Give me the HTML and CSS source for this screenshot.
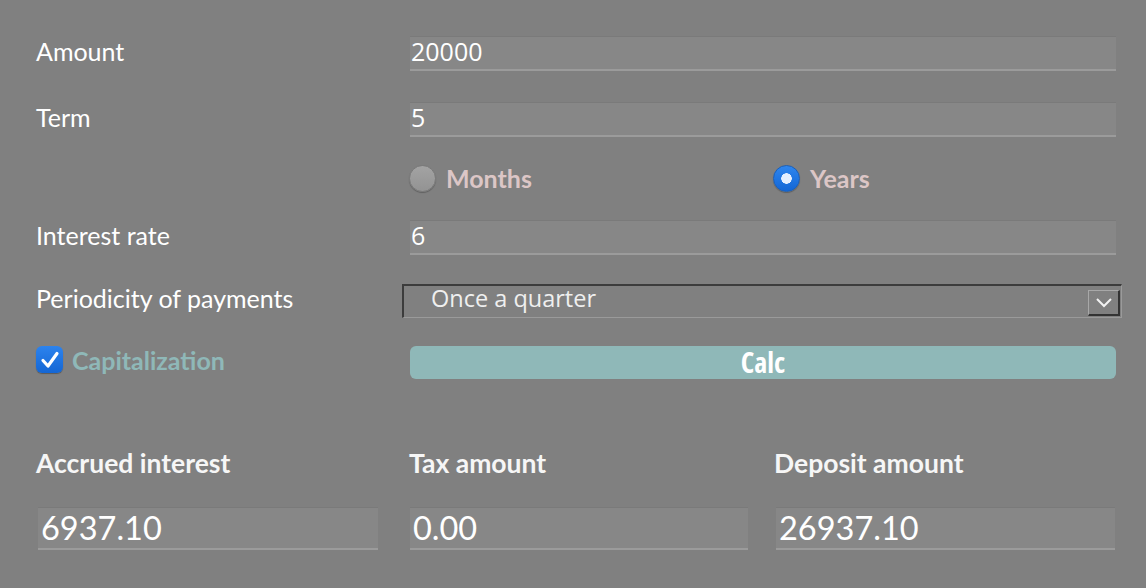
FILE: index.html
```html
<!DOCTYPE html>
<html lang="en">
<head>
<meta charset="utf-8">
<title>Deposit calculator</title>
<link rel="stylesheet" href="styles.css">
</head>
<body>
<main class="calc">
  <div class="row row-amount">
    <label class="label" for="amount">Amount</label>
    <input class="field" id="amount" type="text" value="20000">
  </div>
  <div class="row row-term">
    <label class="label" for="term">Term</label>
    <input class="field" id="term" type="text" value="5">
  </div>
  <div class="row row-radio">
    <span></span>
    <div class="radios">
      <label class="radio radio-months"><input type="radio" name="unit"><span>Months</span></label>
      <label class="radio"><input type="radio" name="unit" checked><span>Years</span></label>
    </div>
  </div>
  <div class="row row-rate">
    <label class="label" for="rate">Interest rate</label>
    <input class="field" id="rate" type="text" value="6">
  </div>
  <div class="row row-period">
    <label class="label" for="period">Periodicity of payments</label>
    <div class="select" id="period">
      <span class="select-text">Once a quarter</span>
      <span class="select-btn"><svg width="18" height="12" viewBox="0 0 18 12"><path d="M2 2 L9 9 L16 2" fill="none" stroke="#f2f2f2" stroke-width="2"/></svg></span>
    </div>
  </div>
  <div class="row row-cap">
    <label class="check"><span class="check-box"><svg width="20" height="18" viewBox="0 0 20 18"><path d="M3 9.5 L8 15 L17 2.5" fill="none" stroke="#fff" stroke-width="3.2" stroke-linecap="round" stroke-linejoin="round"/></svg></span><span class="check-text">Capitalization</span></label>
    <button class="btn" type="button">Calc</button>
  </div>

  <section class="results">
    <div class="result">
      <h3 class="result-title">Accrued interest</h3>
      <div class="result-value">6937.10</div>
    </div>
    <div class="result r2">
      <h3 class="result-title">Tax amount</h3>
      <div class="result-value">0.00</div>
    </div>
    <div class="result r3">
      <h3 class="result-title">Deposit amount</h3>
      <div class="result-value">26937.10</div>
    </div>
  </section>
</main>
</body>
</html>
```

FILE: styles.css
```css
html, body {
  margin: 0;
  padding: 0;
  background: #808080;
}
body {
  font-family: "Lato", "Noto Sans", sans-serif;
  color: #ffffff;
  width: 1146px;
  height: 588px;
  overflow: hidden;
}
.calc {
  padding: 36px 30px 0 36px;
}
.row {
  display: grid;
  grid-template-columns: 374px 1fr;
  align-items: center;
}
.label {
  font-size: 25px;
  color: #fff;
  padding-bottom: 5px;
}
.field {
  box-sizing: border-box;
  height: 35px;
  width: 100%;
  margin: 0;
  padding: 0 1px 4px;
  border: 0;
  border-top: 1px solid #7a7a7a;
  border-bottom: 2px solid #9b9b9b;
  background: #878787;
  color: #fff;
  font-family: "Open Sans", "Lato", sans-serif;
  font-size: 25px;
  outline: none;
}
.row-term { margin-top: 31px; }
.row-radio { margin-top: 26px; height: 28px; }
.row-rate { margin-top: 29px; }
.row-period { margin-top: 28px; }
.row-cap { margin-top: 28px; align-items: start; }

.radios {
  display: flex;
  align-items: center;
  margin-left: -1px;
}
.radio {
  display: flex;
  align-items: center;
  gap: 10px;
  font-weight: 700;
  font-size: 25px;
  color: #dcc6c6;
  padding-bottom: 2px;
}
.radio-months { width: 364px; }
.radio input {
  appearance: none;
  margin: 0;
  width: 27px;
  height: 27px;
  border-radius: 50%;
  box-sizing: border-box;
  background: linear-gradient(#a3a3a3, #939393);
  border: 1px solid #7a7a7a;
  box-shadow: 0 1px 1px rgba(0,0,0,0.25);
}
.radio input:checked {
  background: radial-gradient(circle, #e4efff 0 5px, transparent 5.5px), linear-gradient(#2f86ee, #1266d6);
  border-color: #1b5fb8;
}

.select {
  box-sizing: border-box;
  margin-left: -8px;
  width: calc(100% + 14px);
  height: 34px;
  display: flex;
  align-items: center;
  justify-content: space-between;
  border-top: 2px solid #3c3c3c;
  border-left: 2px solid #3c3c3c;
  border-right: 1px solid #9a9a9a;
  border-bottom: 1px solid #9a9a9a;
  padding: 0 1px 0 27px;
}
.select-text {
  font-family: "Open Sans", "Lato", sans-serif;
  font-size: 23.5px;
  color: #efefef;
  margin-top: -7px;
}
.select-btn {
  box-sizing: border-box;
  width: 32px;
  height: 26px;
  border-top: 1px solid #a8a8a8;
  border-left: 1px solid #a8a8a8;
  border-right: 2px solid #333;
  border-bottom: 2px solid #333;
  display: flex;
  align-items: center;
  justify-content: center;
  margin-top: 4px;
}

.check {
  display: flex;
  align-items: center;
  gap: 9px;
  height: 27px;
}
.check-box {
  width: 27px;
  height: 27px;
  box-sizing: border-box;
  border-radius: 6px;
  background: linear-gradient(#2c83ee, #1466d4);
  box-shadow: 0 1px 1px rgba(0,0,0,0.3);
  display: flex;
  align-items: center;
  justify-content: center;
}
.check-text {
  font-weight: 700;
  font-size: 25px;
  color: #8fb8b8;
}
.btn {
  height: 33px;
  width: 100%;
  border: 0;
  border-radius: 6px;
  background: #8fb8b8;
  color: #fff;
  font-family: "Open Sans", "Lato", sans-serif;
  font-stretch: 84%;
  font-weight: 700;
  font-size: 28px;
  padding: 0;
  line-height: 33px;
}

.results {
  display: grid;
  grid-template-columns: 373px 365px 1fr;
  margin-top: 68px;
}
.result-title {
  margin: 0;
  font-size: 26.5px;
  font-weight: 700;
  line-height: 32px;
  color: #f6f6f6;
}
.result-value {
  box-sizing: border-box;
  margin: 28px 0 0 2px;
  width: 340px;
  height: 43px;
  padding: 0 3px;
  background: #878787;
  border-top: 1px solid #7a7a7a;
  border-bottom: 2px solid #9b9b9b;
  font-size: 32.5px;
  line-height: 40px;
  color: #fff;
}
.r2 .result-value { margin-left: 1px; width: 338px; }
.r3 .result-value { width: 339px; }
```
